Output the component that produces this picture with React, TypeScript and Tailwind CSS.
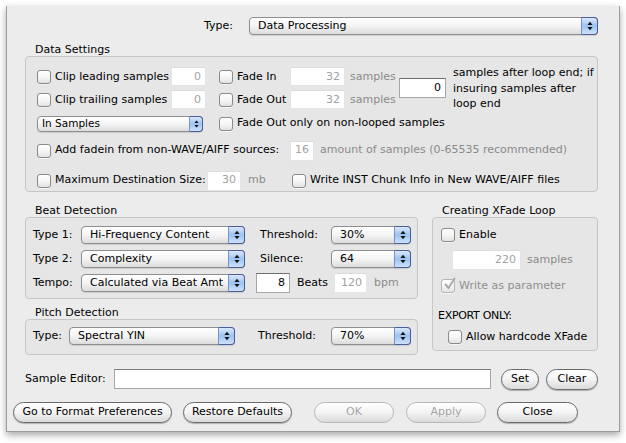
import React from "react";

const Check = ({ checked = false, disabled = false }: { checked?: boolean; disabled?: boolean }) => (
  <span
    className={
      "relative w-[14px] h-[14px] shrink-0 rounded-[3px] border bg-linear-to-b from-white via-[#f6f6f6] to-[#e2e2e2] shadow-[0_1px_0_rgba(255,255,255,0.6)] " +
      (disabled ? "border-[#b4b4b4]" : "border-[#8a8a8a]")
    }
  >
    {checked && (
      <svg viewBox="0 0 14 14" className="absolute left-[1px] top-[-3px] w-[14px] h-[14px]">
        <path d="M2.5 7.5 L5.5 11 L11.5 1.5" fill="none" stroke={disabled ? "#a9a9a9" : "#222"} strokeWidth="2" strokeLinecap="round" strokeLinejoin="round" />
      </svg>
    )}
  </span>
);

const Field = ({
  w,
  h = 19,
  value,
  active = false,
}: {
  w: string;
  h?: number;
  value: string;
  active?: boolean;
}) => (
  <div
    className={
      w +
      " shrink-0 bg-white text-right pr-[4px] flex items-center justify-end " +
      (h === 20 ? "h-[20px] " : "h-[19px] ") +
      (active
        ? "border border-[#a6a6a6] border-t-[#6e6e6e] text-black"
        : "border border-[#e4e4e4] border-t-[#dcdcdc] text-[#a2a2a2]")
    }
  >
    {value}
  </div>
);

const Arrows = ({ small = false }: { small?: boolean }) => (
  <svg viewBox="0 0 7 11" className={small ? "w-[5px] h-[8px]" : "w-[6px] h-[10px]"}>
    <path d="M3.5 0.5 L6.5 4.2 H0.5 Z" fill="#111" />
    <path d="M3.5 10.5 L6.5 6.8 H0.5 Z" fill="#111" />
  </svg>
);

const Select = ({ w, text, small = false }: { w: string; text: string; small?: boolean }) => (
  <div
    className={
      w +
      " shrink-0 flex items-stretch rounded-[4px] border border-[#8e8e8e] bg-linear-to-b from-white via-[#f4f4f4] to-[#dcdcdc] shadow-[0_1px_1px_rgba(0,0,0,0.12)] " +
      (small ? "h-[16px]" : "h-[18px]")
    }
  >
    <span className={"flex-1 flex items-center truncate " + (small ? "pl-[4px] text-[10.5px]" : "pl-[8px]")}>{text}</span>
    <span
      className={
        "-my-px -mr-px flex items-center justify-center rounded-r-[4px] border border-[#4a5d9c] border-l-[#7d8fc0] bg-linear-to-b from-[#dce9fb] via-[#9cc2f2] to-[#cfe2fb] " +
        (small ? "w-[14px]" : "w-[17px]")
      }
    >
      <Arrows small={small} />
    </span>
  </div>
);

const Button = ({ w, label, disabled = false }: { w: string; label: string; disabled?: boolean }) => (
  <div
    className={
      w +
      " shrink-0 h-[21px] rounded-full border flex items-center justify-center bg-linear-to-b from-white via-[#f3f3f3] to-[#dadada] " +
      (disabled
        ? "border-[#b9b9b9] text-[#a6a6a6]"
        : "border-[#6a6a6a] text-black shadow-[0_1px_1px_rgba(0,0,0,0.25)]")
    }
  >
    {label}
  </div>
);

const Group = ({ title, className, children }: { title: string; className: string; children: React.ReactNode }) => (
  <div className="flex flex-col">
    <div className="h-[13px] leading-[13px] pl-[10px]">{title}</div>
    <div className={"rounded-[4px] border border-[#c6c6c6] bg-[#e6e6e6] " + className}>{children}</div>
  </div>
);

const gray = "text-[#8a8a8a]";

export default function App() {
  return (
    <div className="w-[626px] h-[443px] bg-white pt-[6px] pl-[6px] overflow-hidden font-['DejaVu_Sans',sans-serif] text-[11px] text-black">
      <div className="w-[614px] h-[426px] bg-[#ececec] border-x border-b border-[#9c9c9c] shadow-[0_3px_7px_rgba(0,0,0,0.35)] flex flex-col">
        {/* Type row */}
        <div className="flex items-center justify-end gap-[16px] pr-[21px] mt-[11px]">
          <span>Type:</span>
          <Select w="w-[349px]" text="Data Processing" />
        </div>

        {/* Data settings */}
        <div className="pl-[18px] pr-[21px] mt-[8px]">
          <Group title="Data Settings" className="h-[136px] pl-[11px] pt-[8px]">
            <div className="flex items-center">
              <div className="flex flex-col gap-[4px]">
                <div className="flex items-center h-[19px]">
                  <Check />
                  <span className="ml-[4px] w-[116px]">Clip leading samples</span>
                  <Field w="w-[35px]" value="0" />
                  <div className="ml-[13px] w-[71px] flex items-center">
                    <Check />
                    <span className="ml-[4px]">Fade In</span>
                  </div>
                  <Field w="w-[55px]" value="32" />
                  <span className={"ml-[5px] w-[49px] " + gray}>samples</span>
                </div>
                <div className="flex items-center h-[19px]">
                  <Check />
                  <span className="ml-[4px] w-[116px]">Clip trailing samples</span>
                  <Field w="w-[35px]" value="0" />
                  <div className="ml-[13px] w-[71px] flex items-center">
                    <Check />
                    <span className="ml-[4px]">Fade Out</span>
                  </div>
                  <Field w="w-[55px]" value="32" />
                  <span className={"ml-[5px] w-[49px] " + gray}>samples</span>
                </div>
              </div>
              <Field w="w-[47px]" h={20} value="0" active />
              <div className="ml-[7px] leading-[15.5px]">
                samples after loop end; if
                <br />
                insuring samples after
                <br />
                loop end
              </div>
            </div>
            <div className="flex items-center mt-[3px] h-[18px]">
              <Select w="w-[166px]" text="In Samples" small />
              <div className="ml-[16px] flex items-center">
                <Check />
                <span className="ml-[4px]">Fade Out only on non-looped samples</span>
              </div>
            </div>
            <div className="flex items-center mt-[8px] h-[20px]">
              <Check />
              <span className="ml-[4px] w-[235px]">Add fadein from non-WAVE/AIFF sources:</span>
              <Field w="w-[24px]" h={20} value="16" />
              <span className={"ml-[6px] " + gray}>amount of samples (0-65535 recommended)</span>
            </div>
            <div className="flex items-center mt-[10px] h-[20px]">
              <Check />
              <span className="ml-[4px] w-[152px]">Maximum Destination Size:</span>
              <Field w="w-[34px]" h={20} value="30" />
              <span className={"ml-[7px] w-[44px] " + gray}>mb</span>
              <Check />
              <span className="ml-[4px]">Write INST Chunk Info in New WAVE/AIFF files</span>
            </div>
          </Group>
        </div>

        {/* Beat/Pitch + XFade */}
        <div className="pl-[18px] mt-[12px] flex gap-[14px]">
          <div className="w-[393px] flex flex-col">
            <Group title="Beat Detection" className="h-[82px] pl-[7px] pt-[8px]">
              <div className="flex items-center h-[18px]">
                <span className="w-[48px]">Type 1:</span>
                <Select w="w-[164px]" text="Hi-Frequency Content" />
                <span className="ml-[15px] w-[71px]">Threshold:</span>
                <Select w="w-[80px]" text="30%" />
              </div>
              <div className="flex items-center h-[18px] mt-[6px]">
                <span className="w-[48px]">Type 2:</span>
                <Select w="w-[164px]" text="Complexity" />
                <span className="ml-[15px] w-[71px]">Silence:</span>
                <Select w="w-[80px]" text="64" />
              </div>
              <div className="flex items-center h-[18px] mt-[6px]">
                <span className="w-[48px]">Tempo:</span>
                <Select w="w-[164px]" text="Calculated via Beat Amt" />
                <div className="ml-[11px]">
                  <Field w="w-[34px]" h={20} value="8" active />
                </div>
                <span className="ml-[7px] w-[37px]">Beats</span>
                <Field w="w-[33px]" h={20} value="120" />
                <span className={"ml-[7px] " + gray}>bpm</span>
              </div>
            </Group>
            <div className="mt-[7px]">
              <Group title="Pitch Detection" className="h-[36px] pl-[7px] pt-[7px]">
                <div className="flex items-center h-[18px]">
                  <span className="w-[36px]">Type:</span>
                  <Select w="w-[166px]" text="Spectral YIN" />
                  <span className="ml-[23px] w-[73px]">Threshold:</span>
                  <Select w="w-[80px]" text="70%" />
                </div>
              </Group>
            </div>
          </div>
          <div className="w-[166px]">
            <Group title="Creating XFade Loop" className="h-[134px] pl-[8px] pt-[9px]">
              <div className="flex items-center h-[16px]">
                <Check />
                <span className="ml-[4px]">Enable</span>
              </div>
              <div className="flex items-center mt-[7px] ml-[11px] h-[20px]">
                <Field w="w-[69px]" h={20} value="220" />
                <span className={"ml-[6px] " + gray}>samples</span>
              </div>
              <div className="flex items-center mt-[8px] h-[16px]">
                <Check checked disabled />
                <span className={"ml-[4px] " + "text-[#8f8f8f]"}>Write as parameter</span>
              </div>
              <div className="mt-[15px] -ml-[3px] h-[13px] leading-[13px] tracking-[-0.3px]">EXPORT ONLY:</div>
              <div className="flex items-center mt-[7px] ml-[7px] h-[16px]">
                <Check />
                <span className="ml-[4px]">Allow hardcode XFade</span>
              </div>
            </Group>
          </div>
        </div>

        {/* Sample editor */}
        <div className="pl-[18px] mt-[13px] flex items-center h-[22px]">
          <span className="w-[89px]">Sample Editor:</span>
          <div className="w-[377px] h-[20px] bg-white border border-[#a6a6a6] border-t-[#7a7a7a]" />
          <div className="ml-[10px]">
            <Button w="w-[38px]" label="Set" />
          </div>
          <div className="ml-[7px]">
            <Button w="w-[52px]" label="Clear" />
          </div>
        </div>

        {/* Bottom buttons */}
        <div className="pl-[6px] mt-[12px] flex items-center">
          <Button w="w-[159px]" label="Go to Format Preferences" />
          <div className="ml-[11px]">
            <Button w="w-[109px]" label="Restore Defaults" />
          </div>
          <div className="ml-[22px]">
            <Button w="w-[80px]" label="OK" disabled />
          </div>
          <div className="ml-[12px]">
            <Button w="w-[80px]" label="Apply" disabled />
          </div>
          <div className="ml-[11px]">
            <Button w="w-[81px]" label="Close" />
          </div>
        </div>
      </div>
    </div>
  );
}
